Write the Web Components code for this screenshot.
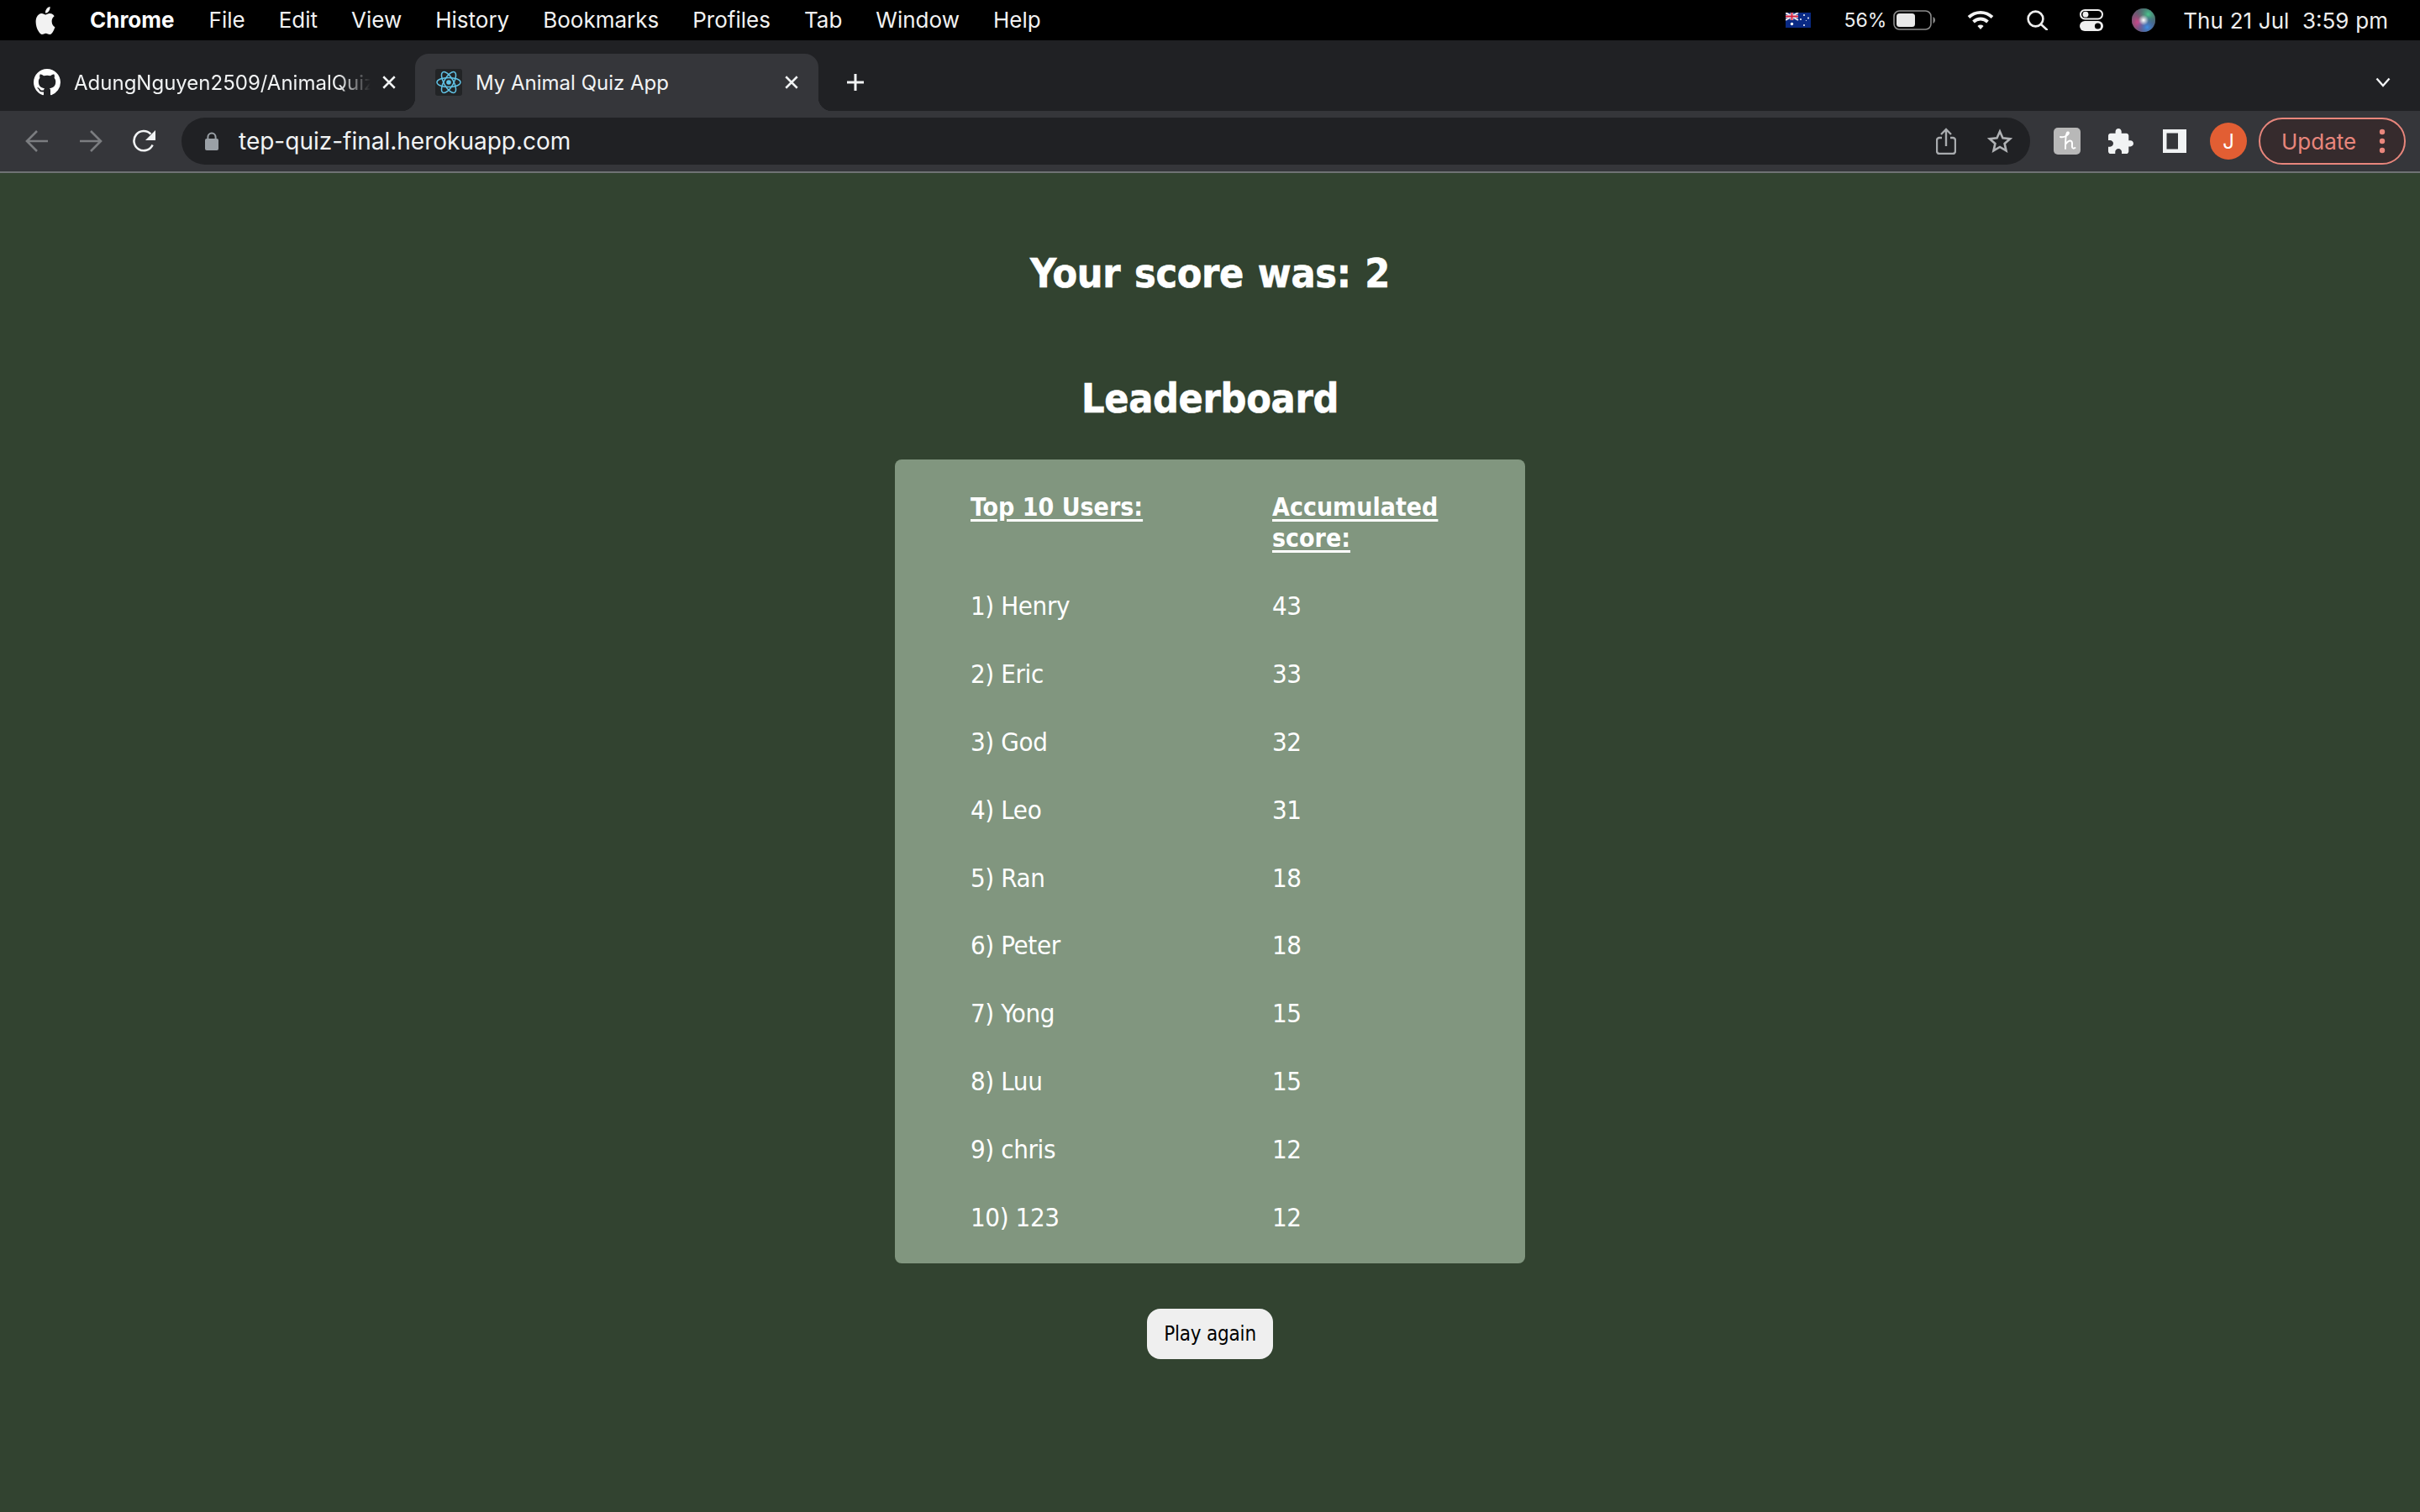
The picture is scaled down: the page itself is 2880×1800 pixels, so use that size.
<!doctype html>
<html lang="en">
<head>
<meta charset="utf-8">
<title>My Animal Quiz App</title>
<style>
  html, body { margin: 0; height: 100%; background: #324330; overflow: hidden; }
  body { display: flex; flex-direction: column; font-family: Inter, "Liberation Sans", sans-serif; }
</style>
</head>
<body>
<mac-menubar>
  <menu-item slot="menu" strong>Chrome</menu-item>
  <menu-item slot="menu">File</menu-item>
  <menu-item slot="menu">Edit</menu-item>
  <menu-item slot="menu">View</menu-item>
  <menu-item slot="menu">History</menu-item>
  <menu-item slot="menu">Bookmarks</menu-item>
  <menu-item slot="menu">Profiles</menu-item>
  <menu-item slot="menu">Tab</menu-item>
  <menu-item slot="menu">Window</menu-item>
  <menu-item slot="menu">Help</menu-item>
</mac-menubar>
<browser-tabstrip>
  <browser-tab icon="github" style="width:478px">AdungNguyen2509/AnimalQuizApp</browser-tab>
  <browser-tab icon="react" active style="width:480px">My Animal Quiz App</browser-tab>
</browser-tabstrip>
<browser-toolbar url="tep-quiz-final.herokuapp.com"></browser-toolbar>
<quiz-page>
  <quiz-heading>Your score was: 2</quiz-heading>
  <quiz-heading second>Leaderboard</quiz-heading>
  <leader-board>
    <leader-row head name="Top 10 Users:" score="Accumulated score:"></leader-row>
    <leader-row name="1) Henry" score="43"></leader-row>
    <leader-row name="2) Eric" score="33"></leader-row>
    <leader-row name="3) God" score="32"></leader-row>
    <leader-row name="4) Leo" score="31"></leader-row>
    <leader-row name="5) Ran" score="18"></leader-row>
    <leader-row name="6) Peter" score="18"></leader-row>
    <leader-row name="7) Yong" score="15"></leader-row>
    <leader-row name="8) Luu" score="15"></leader-row>
    <leader-row name="9) chris" score="12"></leader-row>
    <leader-row name="10) 123" score="12"></leader-row>
  </leader-board>
  <play-button>Play again</play-button>
</quiz-page>

<script>
const ICONS = {
  apple: `<svg viewBox="0 0 24 24" width="28" height="33" preserveAspectRatio="none" fill="#f2f2f2"><path d="M12.152 6.896c-.948 0-2.415-1.078-3.96-1.04-2.04.027-3.91 1.183-4.961 3.014-2.117 3.675-.546 9.103 1.519 12.09 1.013 1.454 2.208 3.09 3.792 3.039 1.52-.065 2.09-.987 3.935-.987 1.831 0 2.35.987 3.96.948 1.637-.026 2.676-1.48 3.676-2.948 1.156-1.688 1.636-3.325 1.662-3.415-.039-.013-3.182-1.221-3.22-4.857-.026-3.04 2.48-4.494 2.597-4.559-1.429-2.09-3.623-2.324-4.39-2.376-2-.156-3.675 1.09-4.61 1.09zM15.53 3.83c.843-1.012 1.4-2.427 1.245-3.83-1.207.052-2.662.805-3.532 1.818-.78.896-1.454 2.338-1.273 3.714 1.338.104 2.715-.688 3.559-1.701"/></svg>`,
  flag: `<svg viewBox="0 0 30 18" width="30" height="18"><rect width="30" height="18" fill="#0a2a84"/><rect width="15" height="9" fill="#1c3a8c"/><path d="M0 0l15 9M15 0L0 9" stroke="#f3e9ee" stroke-width="2"/><path d="M7.5 0v9M0 4.5h15" stroke="#f3e9ee" stroke-width="3.4"/><path d="M7.5 0v9M0 4.5h15" stroke="#d3213f" stroke-width="1.8"/><g fill="#fff"><circle cx="7.5" cy="13.5" r="1.7"/><circle cx="22" cy="3" r="1"/><circle cx="22" cy="15" r="1"/><circle cx="18" cy="8" r="1"/><circle cx="27" cy="6.5" r="1"/><circle cx="24.5" cy="9.5" r=".6"/></g></svg>`,
  battery: `<svg viewBox="0 0 50 24" width="50" height="24"><rect x="1" y="1" width="44" height="22" rx="6.5" fill="none" stroke="#8b8b8b" stroke-width="1.6"/><rect x="4" y="4" width="22" height="16" rx="3.5" fill="#e8e8e8"/><path d="M47.5 8c1.6.8 2.5 2.2 2.5 4s-.9 3.2-2.5 4z" fill="#8b8b8b"/></svg>`,
  wifi: `<svg viewBox="0 0 32 24" width="32" height="24" fill="none" stroke="#f2f2f2" stroke-width="3.8"><path d="M2 8.5c8-7.6 20-7.6 28 0"/><path d="M7.5 14c5-4.7 12-4.7 17 0"/><path d="M12.4 19 16 23l3.6-4c-2.2-1.900-5-1.900-7.200 0z" fill="#f2f2f2" stroke="none"/></svg>`,
  search: `<svg viewBox="0 0 25 24" width="25" height="24" fill="none" stroke="#eee" stroke-width="2.6"><circle cx="10.5" cy="10.5" r="8.9"/><path d="M17 17l7 6.4" stroke-linecap="round"/></svg>`,
  control: `<svg viewBox="0 0 28 26" width="28" height="26"><rect x="1" y="1" width="26" height="10.5" rx="5.2" fill="none" stroke="#eee" stroke-width="2"/><circle cx="7" cy="6.2" r="3.4" fill="#eee"/><rect y="14" width="28" height="12" rx="6" fill="#eee"/><circle cx="21.5" cy="20" r="3.6" fill="#000"/></svg>`,
  siri: `<svg viewBox="0 0 28 28" width="28" height="28"><defs><radialGradient id="s1" cx=".3" cy=".6" r=".6"><stop offset="0" stop-color="#e0468e"/><stop offset="1" stop-color="#6b3a5c" stop-opacity=".2"/></radialGradient><radialGradient id="s2" cx=".7" cy=".25" r=".55"><stop offset="0" stop-color="#49c58d"/><stop offset="1" stop-color="#2c6a63" stop-opacity="0"/></radialGradient><radialGradient id="s3" cx=".65" cy=".8" r=".5"><stop offset="0" stop-color="#3f8fe6"/><stop offset="1" stop-color="#2c5a9a" stop-opacity="0"/></radialGradient><radialGradient id="s4" cx=".5" cy=".5" r=".22"><stop offset="0" stop-color="#fff"/><stop offset="1" stop-color="#fff" stop-opacity="0"/></radialGradient></defs><circle cx="14" cy="14" r="14" fill="#5a6a78"/><circle cx="14" cy="14" r="14" fill="url(#s1)"/><circle cx="14" cy="14" r="14" fill="url(#s2)"/><circle cx="14" cy="14" r="14" fill="url(#s3)"/><circle cx="14" cy="14" r="14" fill="url(#s4)"/></svg>`,
  github: `<svg viewBox="0 0 16 16" width="32" height="32" fill="#fff"><path d="M8 0C3.58 0 0 3.58 0 8c0 3.54 2.29 6.53 5.47 7.59.4.07.55-.17.55-.38 0-.19-.01-.82-.01-1.49-2.01.37-2.53-.49-2.69-.94-.09-.23-.48-.94-.82-1.13-.28-.15-.68-.52-.01-.53.63-.01 1.08.58 1.23.82.72 1.21 1.87.87 2.33.66.07-.52.28-.87.51-1.07-1.78-.2-3.64-.89-3.64-3.95 0-.87.31-1.59.82-2.15-.08-.2-.36-1.02.08-2.12 0 0 .67-.21 2.2.82.64-.18 1.32-.27 2-.27.68 0 1.36.09 2 .27 1.53-1.04 2.2-.82 2.2-.82.44 1.1.16 1.92.08 2.12.51.56.82 1.27.82 2.15 0 3.07-1.87 3.75-3.65 3.95.29.25.54.73.54 1.48 0 1.07-.01 1.93-.01 2.2 0 .21.15.46.55.38A8.013 8.013 0 0016 8c0-4.42-3.58-8-8-8z"/></svg>`,
  react: `<svg viewBox="0 0 32 32" width="32" height="32"><rect width="32" height="32" rx="3" fill="#222426"/><g fill="none" stroke="#61c3e6" stroke-width="1.5"><ellipse cx="16" cy="16" rx="14" ry="5.6"/><ellipse cx="16" cy="16" rx="14" ry="5.6" transform="rotate(60 16 16)"/><ellipse cx="16" cy="16" rx="14" ry="5.6" transform="rotate(120 16 16)"/></g><circle cx="16" cy="16" r="2.8" fill="#61c3e6"/></svg>`,
  close: `<svg viewBox="0 0 16 16" width="18" height="18" fill="none" stroke="#f1f3f4" stroke-width="2.2"><path d="M2 2l12 12M14 2L2 14"/></svg>`,
  plus: `<svg viewBox="0 0 24 24" width="24" height="24" fill="none" stroke="#f1f3f4" stroke-width="3"><path d="M12 2v20M2 12h20"/></svg>`,
  chevron: `<svg viewBox="0 0 18 12" width="18" height="12" fill="none" stroke="#f1f3f4" stroke-width="2.4"><path d="M1.5 1.5 9 10l7.5-8.500"/></svg>`,
  back: `<svg viewBox="0 0 28 28" width="28" height="28" fill="none" stroke="#7b7d80" stroke-width="2.6"><path d="M27 14H3M14 2 2 14l12 12"/></svg>`,
  forward: `<svg viewBox="0 0 28 28" width="28" height="28" fill="none" stroke="#7b7d80" stroke-width="2.6"><path d="M1 14h24M14 2l12 12-12 12"/></svg>`,
  reload: `<svg viewBox="0 0 28 28" width="28" height="28" fill="none"><path d="M23.6 18.5A11.6 11.6 0 1 1 21.4 5.6" stroke="#f1f3f4" stroke-width="2.6"/><path d="M27 1v12H15z" fill="#f1f3f4"/></svg>`,
  lock: `<svg viewBox="0 0 16 22" width="16" height="22"><path d="M3.4 9V6.2a4.6 4.6 0 0 1 9.2 0V9" fill="none" stroke="#9aa0a6" stroke-width="2"/><rect y="8" width="16" height="14" rx="2" fill="#9aa0a6"/></svg>`,
  share: `<svg viewBox="0 0 24 32" width="24" height="32" fill="none" stroke="#a8abae" stroke-width="2.4"><path d="M7 12H4a3 3 0 0 0-3 3v13a3 3 0 0 0 3 3h16a3 3 0 0 0 3-3V15a3 3 0 0 0-3-3h-3M12 22V2M6 8l6-6 6 6"/></svg>`,
  star: `<svg viewBox="0 0 30 30" width="30" height="30" fill="none" stroke="#b0b2b5" stroke-width="2.6" stroke-linejoin="miter"><path d="M15 3.4l3.5 8 8.6.8-6.5 5.7 1.9 8.5-7.5-4.4-7.5 4.4 1.9-8.5-6.5-5.7 8.6-.8z"/></svg>`,
  puzzle: `<svg viewBox="2 1 21 21" width="30" height="30" fill="#f1f3f4"><path d="M20.5 11H19V7c0-1.1-.9-2-2-2h-4V3.5C13 2.12 11.88 1 10.5 1S8 2.12 8 3.5V5H4c-1.1 0-1.99.9-1.99 2v3.8H3.5c1.49 0 2.7 1.21 2.7 2.7s-1.21 2.7-2.7 2.7H2V20c0 1.1.9 2 2 2h3.8v-1.5c0-1.49 1.21-2.7 2.7-2.7 1.49 0 2.7 1.21 2.7 2.7V22H17c1.1 0 2-.9 2-2v-4h1.5c1.38 0 2.5-1.12 2.5-2.5S21.88 11 20.5 11z"/></svg>`,
  panel: `<svg viewBox="0 0 28 28" width="28" height="28"><rect width="28" height="28" fill="#f1f3f4"/><rect x="4.500" y="4.500" width="13.500" height="19" fill="#35363a"/></svg>`,
  knowt: `<svg viewBox="0 0 32 32" width="32" height="32"><rect width="32" height="32" rx="5" fill="#b8b8b8"/><path d="M8 11c3 1 7-1 9-3 1.500-1.500 1-3-.5-2.500-2 .7-2.500 8-2.500 19.500M14 20c1.500-3 5-5.500 7-4 2 1.500.5 5 1 7 .5 2 2 2 3.500 1" fill="none" stroke="#fff" stroke-width="2" stroke-linecap="round"/></svg>`,
  kebab: `<svg viewBox="0 0 8 32" width="8" height="32" fill="#e8867c"><circle cx="4" cy="5" r="3.200"/><circle cx="4" cy="16" r="3.200"/><circle cx="4" cy="27" r="3.200"/></svg>`
};

function shadow(el, html) {
  el.attachShadow({ mode: 'open' }).innerHTML = html;
}

class MenuItem extends HTMLElement {
  connectedCallback() {
    shadow(this, `<style>
      :host { display: block; font-size: 26px; line-height: 48px; color: #f2f2f2; white-space: nowrap; }
      :host([strong]) { font-weight: 700; color: #fff; margin-right: 1px; }
    </style><slot></slot>`);
  }
}

class MacMenubar extends HTMLElement {
  connectedCallback() {
    shadow(this, `<style>
      :host { display: flex; align-items: center; height: 48px; background: #000; padding: 0 38px 0 40px; flex: none; }
      .apple { display: flex; margin-right: 39px; }
      .menu { display: flex; gap: 40px; }
      .status { margin-left: auto; display: flex; align-items: center; color: #eee; font-size: 23px; white-space: pre; }
      .status > * { display: flex; }
      .pct { margin: 0 8px 0 39px; }
      .wifi { margin: 0 39px 0 38px; }
      .cc { margin: 0 34px 0 38px; }
      .time { margin-left: 33px; font-size: 26px; word-spacing: .5px; }
    </style>
    <span class="apple">${ICONS.apple}</span>
    <div class="menu"><slot name="menu"></slot></div>
    <div class="status">
      <span>${ICONS.flag}</span><span class="pct">56%</span><span>${ICONS.battery}</span>
      <span class="wifi">${ICONS.wifi}</span><span>${ICONS.search}</span>
      <span class="cc">${ICONS.control}</span><span>${ICONS.siri}</span>
      <span class="time">Thu 21 Jul  3:59 pm</span>
    </div>`);
  }
}

class BrowserTab extends HTMLElement {
  connectedCallback() {
    shadow(this, `<style>
      :host { display: flex; align-items: center; gap: 16px; box-sizing: border-box; height: 68px; padding: 0 15px 0 24px; position: relative; color: #f1f3f4; font-size: 24px; flex: none; }
      :host([active]) { background: #35363a; border-radius: 16px 16px 0 0; padding-right: 16px; }
      :host([active])::before, :host([active])::after { content: ""; position: absolute; bottom: 0; width: 16px; height: 16px; }
      :host([active])::before { left: -16px; background: radial-gradient(circle at 0 0, transparent 16px, #35363a 16.500px); }
      :host([active])::after { right: -16px; background: radial-gradient(circle at 100% 0, transparent 16px, #35363a 16.500px); }
      .icon { display: flex; flex: none; }
      .title { flex: 1; min-width: 0; overflow: hidden; white-space: nowrap; -webkit-mask-image: linear-gradient(to left, transparent 6px, #000 44px); }
      :host([active]) .title { -webkit-mask-image: none; }
      .close { flex: none; width: 32px; display: flex; justify-content: center; margin-left: -16px; }
    </style>
    <span class="icon">${ICONS[this.getAttribute('icon')]}</span>
    <span class="title"><slot></slot></span>
    <span class="close">${ICONS.close}</span>`);
  }
}

class BrowserTabstrip extends HTMLElement {
  connectedCallback() {
    shadow(this, `<style>
      :host { display: flex; align-items: flex-end; height: 84px; background: #202124; padding: 0 32px 0 16px; flex: none; }
      .plus { height: 68px; display: flex; align-items: center; margin-left: 32px; }
      .chev { height: 68px; display: flex; align-items: center; margin-left: auto; padding-right: 3px; }
    </style>
    <slot></slot>
    <span class="plus">${ICONS.plus}</span>
    <span class="chev">${ICONS.chevron}</span>`);
  }
}

class BrowserToolbar extends HTMLElement {
  connectedCallback() {
    shadow(this, `<style>
      :host { display: flex; align-items: center; box-sizing: border-box; height: 74px; padding: 0 17px 0 12px; background: #35363a; border-bottom: 2px solid #6f7274; flex: none; }
      .nav { width: 64px; display: flex; justify-content: center; flex: none; }
      .omni { flex: 1; display: flex; align-items: center; height: 56px; margin-left: 12px; padding: 0 16px 0 28px; background: #202124; border-radius: 28px; }
      .url { margin-left: 24px; font-size: 28px; color: #f1f3f4; }
      .lock { display: flex; }
      .omni-btn { width: 40px; display: flex; justify-content: center; }
      .share { margin-left: auto; margin-right: 24px; }
      .ext { display: flex; margin-left: 28px; }
      .puzzle { display: flex; margin-left: 33px; }
      .panel { display: flex; margin-left: 35px; }
      .avatar { width: 44px; height: 44px; margin-left: 28px; border-radius: 50%; background: #e25e33; color: #fff; font-size: 24px; display: flex; align-items: center; justify-content: center; }
      .update { display: flex; align-items: center; justify-content: space-between; box-sizing: border-box; width: 175px; height: 56px; margin-left: 14px; padding: 0 22px 0 25px; border: 2px solid #e8867c; border-radius: 28px; background: #362b2d; color: #e8867c; font-size: 26px; }
      .update svg { display: block; }
    </style>
    <span class="nav">${ICONS.back}</span><span class="nav">${ICONS.forward}</span><span class="nav">${ICONS.reload}</span>
    <div class="omni">
      <span class="lock">${ICONS.lock}</span>
      <span class="url">${this.getAttribute('url')}</span>
      <span class="omni-btn share">${ICONS.share}</span>
      <span class="omni-btn">${ICONS.star}</span>
    </div>
    <span class="ext">${ICONS.knowt}</span>
    <span class="puzzle">${ICONS.puzzle}</span>
    <span class="panel">${ICONS.panel}</span>
    <span class="avatar">J</span>
    <div class="update"><span>Update</span>${ICONS.kebab}</div>`);
  }
}

const TAHOMA = '"DejaVu Sans Condensed", "DejaVu Sans", sans-serif';

class QuizPage extends HTMLElement {
  connectedCallback() {
    shadow(this, `<style>
      :host { display: flex; flex-direction: column; align-items: center; flex: 1; padding-top: 89px; background: #324330; color: #fff; font-family: ${TAHOMA}; }
    </style><slot></slot>`);
  }
}

class QuizHeading extends HTMLElement {
  connectedCallback() {
    shadow(this, `<style>
      :host { display: block; font-size: 48px; font-weight: 700; line-height: 60px; letter-spacing: -.3px; word-spacing: 2px; -webkit-text-stroke: .6px #fff; }
      :host([second]) { margin-top: 89px; margin-bottom: 43px; }
    </style><slot></slot>`);
  }
}

class LeaderBoard extends HTMLElement {
  connectedCallback() {
    shadow(this, `<style>
      :host { display: block; box-sizing: border-box; width: 750px; height: 957px; padding: 16px 0 0 90px; background: #81967f; border-radius: 8px; }
    </style><slot></slot>`);
  }
}

class LeaderRow extends HTMLElement {
  connectedCallback() {
    shadow(this, `<style>
      :host { display: grid; grid-template-columns: 359px 210px; align-items: center; height: 80.8px; font-size: 31px; line-height: 37px; letter-spacing: -.4px; }
      :host([head]) { height: 118.600px; align-items: start; padding-top: 22px; box-sizing: border-box; font-weight: 700; font-size: 30px; letter-spacing: 0; text-decoration: underline; text-underline-offset: 4px; }
    </style>
    <span>${this.getAttribute('name')}</span><span>${this.getAttribute('score')}</span>`);
  }
}

class PlayButton extends HTMLElement {
  connectedCallback() {
    shadow(this, `<style>
      :host { display: flex; align-items: center; justify-content: center; width: 150px; height: 60px; margin-top: 54px; background: #efefef; border-radius: 16px; color: #000; font-size: 24px; letter-spacing: -.2px; }
    </style><slot></slot>`);
  }
}

customElements.define('menu-item', MenuItem);
customElements.define('mac-menubar', MacMenubar);
customElements.define('browser-tab', BrowserTab);
customElements.define('browser-tabstrip', BrowserTabstrip);
customElements.define('browser-toolbar', BrowserToolbar);
customElements.define('quiz-page', QuizPage);
customElements.define('quiz-heading', QuizHeading);
customElements.define('leader-board', LeaderBoard);
customElements.define('leader-row', LeaderRow);
customElements.define('play-button', PlayButton);
</script>
</body>
</html>
